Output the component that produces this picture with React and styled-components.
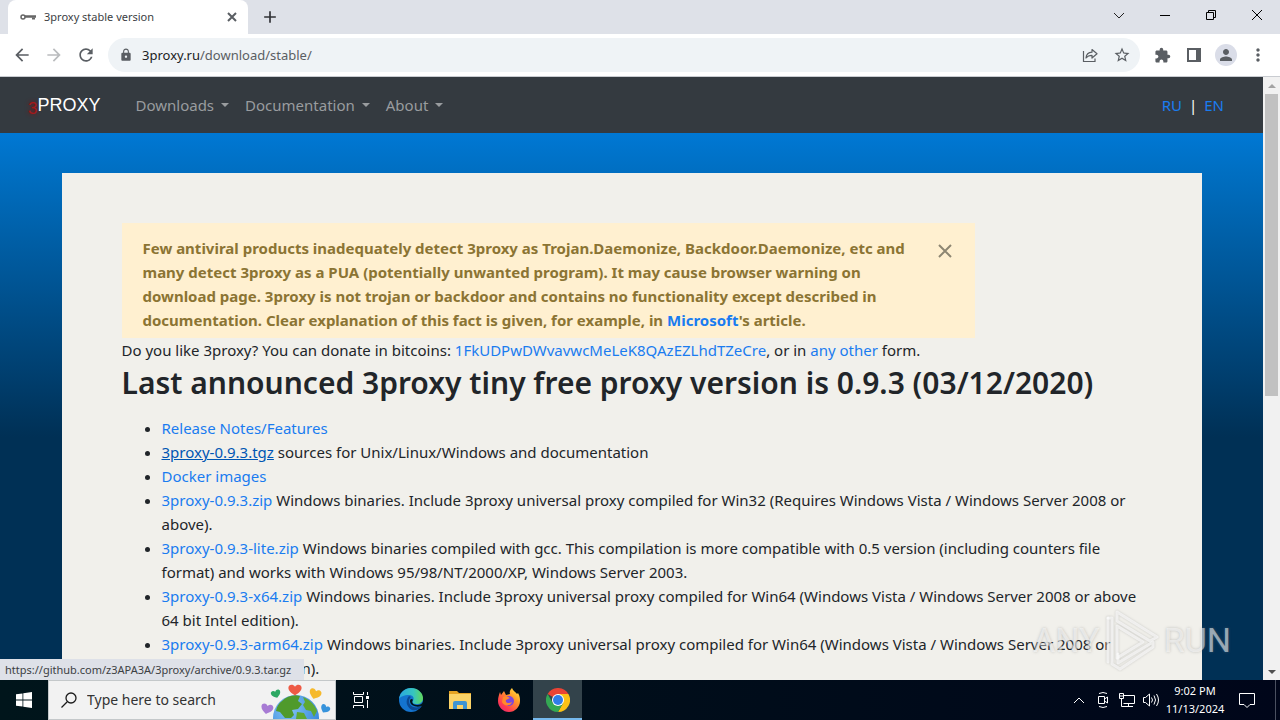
import React, { useState } from 'react';
import styled, { createGlobalStyle } from 'styled-components';
import {
  MdArrowBack, MdArrowForward, MdRefresh, MdLock, MdStarBorder,
  MdExtension, MdPerson, MdMoreVert, MdAdd
} from 'react-icons/md';

const GlobalStyle = createGlobalStyle`
  * {
    box-sizing: border-box;
  }

  body {
    margin: 0;
    font-family: 'Noto Sans', 'Open Sans', sans-serif;
    font-size: 15px;
    line-height: 24px;
    color: #212529;
  }

  button, input {
    font: inherit;
    color: inherit;
  }
`

const StyledScreen = styled.div`
  display: flex;
  flex-direction: column;
  height: 100vh;
  overflow: hidden;
`

/* browser chrome */

const StyledTabStrip = styled.div`
  display: flex;
  align-items: stretch;
  flex-shrink: 0;
  height: 34px;
  padding-left: 8px;
  background: #dee1e8;
`

const StyledTab = styled.div`
  display: flex;
  align-items: center;
  width: 240px;
  padding: 0 8px 0 12px;
  background: #fff;
  border-radius: 8px 8px 0 0;
  color: #3c4043;
  font-size: 11px;

  span {
    flex: 1;
    margin-left: 8px;
  }
`

const StyledIconButton = styled.button`
  display: flex;
  align-items: center;
  justify-content: center;
  flex-shrink: 0;
  width: ${props => props.$width || 32}px;
  padding: 0;
  background: none;
  border: none;
  color: ${props => props.$color || '#5a5e63'};
  cursor: pointer;
`

const StyledWindowControls = styled.div`
  display: flex;
  margin-left: auto;
  padding-bottom: 5px;
`

const StyledToolbar = styled.div`
  display: flex;
  align-items: center;
  flex-shrink: 0;
  height: 43px;
  padding: 0 6px;
  background: #fff;
  border-bottom: 1px solid #c9ccd1;
`

const StyledAddressBar = styled.div`
  display: flex;
  align-items: center;
  flex: 1;
  height: 34px;
  margin: 0 6px;
  padding: 0 2px 0 11px;
  border-radius: 17px;
  background: #eff3f6;
  color: #5a5e63;
  font-size: 13px;

  div {
    flex: 1;
    margin-left: 9px;
  }

  strong {
    color: #202124;
    font-weight: 400;
  }
`

const StyledAvatar = styled.span`
  display: flex;
  align-items: center;
  justify-content: center;
  width: 22px;
  height: 22px;
  border-radius: 50%;
  background: #dadde8;
`

/* page */

const StyledViewport = styled.div`
  display: flex;
  flex: 1;
  min-height: 0;
  position: relative;
`

const StyledPage = styled.div`
  flex: 1;
  min-width: 0;
  overflow: hidden;
  background: #003055 linear-gradient(#0078d4 56px, #0070c4 90px, #003055 360px);
`

const StyledNavbar = styled.nav`
  display: flex;
  align-items: center;
  height: 56px;
  padding: 0 39px 0 28px;
  background: #343a40;
`

const StyledBrand = styled.a`
  display: flex;
  align-items: flex-end;
  margin-right: 27px;
  color: #fff;
  font-family: 'Liberation Sans', Arial, sans-serif;
  font-size: 18px;
  text-decoration: none;

  span {
    color: #a3191c;
    font-size: 17px;
    line-height: 16px;
    text-shadow: 0 0 4px #801010;
  }
`

const StyledNavLink = styled.button`
  display: flex;
  align-items: center;
  padding: 8px;
  background: none;
  border: none;
  color: #999c9f;
  cursor: pointer;

  &:after {
    content: '';
    margin-left: 7px;
    border-top: 4px solid #999c9f;
    border-left: 4px solid transparent;
    border-right: 4px solid transparent;
  }
`

const StyledLanguages = styled.div`
  display: flex;
  gap: 7px;
  margin-left: auto;
  color: #fff;
`

const StyledLink = styled.a`
  color: ${props => props.$hovered ? '#0056b3' : '#1a7cf0'};
  text-decoration: ${props => props.$hovered ? 'underline' : 'none'};
`

const StyledContainer = styled.main`
  max-width: 1140px;
  min-height: 100%;
  margin: 40px auto 0;
  padding: 50px 60px;
  background: #f1f0eb;
`

const StyledAlert = styled.div`
  display: flex;
  align-items: flex-start;
  max-width: 853px;
  height: 115px;
  padding: 13px 20px 0 21px;
  background: #fff0d0;
  color: #8b7433;
  font-weight: 700;

  p {
    flex: 1;
    margin: 0;
  }
`

const StyledDismiss = styled(StyledIconButton)`
  width: 20px;
  height: 30px;
`

const StyledHeading = styled.h2`
  margin: 0 0 12px;
  font-size: 30px;
  font-weight: 600;
  line-height: 42px;
`

const StyledText = styled.p`
  margin: 0;
`

const StyledList = styled.ul`
  margin: 0;
  padding-left: 40px;
`

const StyledScrollbar = styled.div`
  display: flex;
  flex-direction: column;
  width: 17px;
  background: #f1f1f1;
`

const StyledScrollButton = styled(StyledIconButton)`
  width: 17px;
  height: 17px;
`

const StyledTrack = styled.div`
  flex: 1;
  padding: 0 2px;

  &:before {
    content: '';
    display: block;
    height: 53%;
    background: #c1c1c1;
  }
`

const StyledStatus = styled.div`
  position: absolute;
  left: 0;
  bottom: 0;
  width: 304px;
  height: 21px;
  padding-left: 5px;
  background: #dee1e8;
  color: #3c4043;
  font-size: 11px;
  line-height: 21px;
  white-space: nowrap;
`

const StyledWatermark = styled.div`
  position: absolute;
  right: 49px;
  bottom: 8px;
  display: flex;
  align-items: center;
  gap: 4px;
  color: rgba(255, 255, 255, 0.55);
  font-family: Roboto, sans-serif;
  font-size: 34px;
  line-height: 60px;
  text-shadow: 0 0 3px rgba(120, 120, 120, 0.4);
  pointer-events: none;
`

/* taskbar */

const StyledTaskbar = styled.footer`
  display: flex;
  flex-shrink: 0;
  height: 40px;
  background: linear-gradient(90deg, #00151b, #000c1a 60%, #00061a);
  color: #fff;
`

const StyledSearch = styled.label`
  display: flex;
  align-items: center;
  width: 288px;
  padding-left: 12px;
  background: #f2f2f2;
  border: 1px solid #c4c8ca;
  color: #1b1b1b;

  input {
    flex: 1;
    min-width: 0;
    margin-left: 10px;
    padding: 0;
    background: none;
    border: none;
    outline: none;
    font-size: 14px;
  }

  input::placeholder {
    color: #333;
    opacity: 1;
  }

  > svg:last-child {
    align-self: stretch;
    margin-right: 2px;
  }
`

const StyledApp = styled(StyledIconButton)`
  width: ${props => props.$width || 49}px;
  border-bottom: 2px solid ${props => props.$active ? '#76b9ed' : 'transparent'};
  border-top: 2px solid transparent;
  background: ${props => props.$active ? '#33434b' : 'none'};
`

const StyledTray = styled.div`
  display: flex;
  margin-left: auto;
  padding-right: 4px;
`

const StyledClock = styled.button`
  width: 64px;
  padding: 2px 0;
  background: none;
  border: none;
  color: #fff;
  font-size: 11px;
  line-height: 18px;
  text-align: center;
`

const StyledNotifications = styled(StyledIconButton)`
  width: 49px;
  padding-right: 9px;
  border-right: 1px solid #4a5060;
`

const KeyIcon = () => (
  <svg width="16" height="16" viewBox="0 0 16 16" fill="none" stroke="#666">
    <circle cx="3" cy="8" r="2" strokeWidth="1.5" />
    <path d="M5 7.5h11" strokeWidth="2.5" />
    <path d="M12 9.5h3" strokeWidth="2" />
  </svg>
)

const ShareIcon = () => (
  <svg width="16" height="16" viewBox="0 0 16 16" fill="none" stroke="#5a5e63" strokeWidth="1.2">
    <path d="M1.500 4v10.500h11.500v-3" />
    <path d="M4 11c.3-4 2.500-5.700 6-5.800V2.500l5 4.300-5 4.200V8.300c-2.700 0-4.500.7-6 2.700z" strokeLinejoin="round" />
  </svg>
)

const PanelIcon = () => (
  <svg width="14" height="14" viewBox="0 0 14 14">
    <path d="M0 0h14v14H0zM2 2v10h7V2z" fill="#5a5e63" fillRule="evenodd" />
  </svg>
)

const Glyph = ({ d, size = 12, width = 1, color = 'currentColor' }) => (
  <svg width={size} height={size} viewBox={`0 0 ${size} ${size}`} fill="none" stroke={color} strokeWidth={width}>
    <path d={d} />
  </svg>
)

const Arrow = ({ down, color }) => (
  <svg width="8" height="4" viewBox="0 0 8 4">
    <path d={down ? 'M0 0h8L4 4z' : 'M0 4h8L4 0z'} fill={color} />
  </svg>
)

const PlayLogo = () => (
  <svg width="56" height="64" viewBox="0 0 56 64" fill="none" stroke="#fff" strokeOpacity="0.65" strokeWidth="3" strokeLinejoin="round" strokeLinecap="round">
    <g filter="drop-shadow(0 0 1px rgba(120,120,120,.5))">
      <path d="M13 4L53 29 46 33 13 13z" />
      <path d="M13 18v32l26-16z" />
      <path d="M4 10h4v46l8 5 33-22v-5L14 55V46" />
      <path d="M4 10v44" />
    </g>
  </svg>
)

const WindowsLogo = () => (
  <svg width="16" height="16" viewBox="0 0 16 16" fill="#fff">
    <path d="M0 2.300l6.500-.9v6.200H0zM7.300 1.300L16 0v7.600H7.300zM0 8.400h6.500v6.200L0 13.700zM7.300 8.400H16V16l-8.700-1.300z" />
  </svg>
)

const Heart = ({ x, y, r = 0, s = 1, fill }) => (
  <path
    transform={`translate(${x} ${y}) rotate(${r}) scale(${s})`}
    d="M0 5C-3 3-6 1-6-2c0-3 4-4 6-1 2-3 6-2 6 1 0 3-3 5-6 7z"
    fill={fill}
  />
)

const Globe = () => (
  <svg width="72" height="38" viewBox="0 0 72 38">
    <defs>
      <radialGradient id="sea" cx="0.35" cy="0.3" r="0.8">
        <stop offset="0" stopColor="#83c3f5" />
        <stop offset="1" stopColor="#2d7fd8" />
      </radialGradient>
    </defs>
    <circle cx="35" cy="37" r="23" fill="url(#sea)" />
    <path d="M21 20c5-5 12-7 18-5l-2 5 4 3-4 5-6 1 2 5-3 3h-6l-5-6-4-1c1-5 3-8 6-10z" fill="#4f9a2c" />
    <path d="M42 16c6 2 12 8 14 14l-3 6-3-6-5-1-3-5 2-3zM36 31l7 1 3 6H35z" fill="#5fa832" />
    <Heart x={6} y={28} r={12} fill="#a77bd4" />
    <Heart x={15} y={13} r={-18} s={0.8} fill="#2da863" />
    <Heart x={34} y={9} s={1.1} fill="#ee5a45" />
    <Heart x={54} y={13} r={20} fill="#f6b92c" />
    <Heart x={64} y={28} r={30} s={0.8} fill="#3793dc" />
  </svg>
)

const TaskViewIcon = () => (
  <svg width="18" height="18" viewBox="0 0 18 18" fill="none" stroke="#fff">
    <path d="M1.500 1v2.500h10V1M1.500 17v-2.500h10V17M2.500 5.500h8v6h-8zM15.500 1v3M15.500 9v8" />
    <path d="M14 5h3v3h-3z" fill="#fff" stroke="none" />
  </svg>
)

const EdgeIcon = () => (
  <svg width="24" height="24" viewBox="0 0 24 24">
    <defs>
      <linearGradient id="edgeTop" x1="0" x2="1">
        <stop offset="0" stopColor="#2aa7e0" />
        <stop offset="0.6" stopColor="#36c5c0" />
        <stop offset="1" stopColor="#62d95a" />
      </linearGradient>
    </defs>
    <circle cx="12" cy="12" r="12" fill="#1474cf" />
    <path d="M0 11C1 4 6 0 12 0c7 0 12 5 12 10 0 4-3 6-6 6-4 0-5-1-4-3 2-4-1-6-4-6C5 7 1 9 0 11z" fill="url(#edgeTop)" />
    <path d="M10 8c-4 4-3 11 3 14 4 1 8-1 10-4-6 3-13 1-13-5 0-2 1-3 2-4z" fill="#0b4a94" />
    <path d="M14 12c-2 2 0 5 4 5 3 0 5-1 6-3v3c-3 3-13 2-13-4 0-2 2-3 3-1z" fill="#00151b" />
  </svg>
)

const FolderIcon = () => (
  <svg width="22" height="18" viewBox="0 0 22 18">
    <path d="M0 0h8l2 2h12v4H0z" fill="#e5a322" />
    <path d="M0 3h22v15H0z" fill="#fbd367" />
    <path d="M4 18v-6q0-2 2-2h10q2 0 2 2v6h-4v-4H8v4z" fill="#3e95d3" />
  </svg>
)

const FirefoxIcon = () => (
  <svg width="24" height="24" viewBox="0 0 24 24">
    <defs>
      <linearGradient id="fox" x1="1" y1="0" x2="0.2" y2="1">
        <stop offset="0" stopColor="#fff24a" />
        <stop offset="0.4" stopColor="#ff9a28" />
        <stop offset="0.8" stopColor="#ff3b50" />
        <stop offset="1" stopColor="#e62a6c" />
      </linearGradient>
    </defs>
    <path d="M3 4l1 3 3-4 2 4 4-1c-1-3 1-5 2-6 1 3 4 4 5 6l1-1c2 3 2 6 2 8 0 6-5 11-11 11S1 19 1 13c0-4 1-6 2-9z" fill="url(#fox)" />
    <circle cx="12" cy="13" r="5" fill="#7b46dd" />
    <path d="M6 9c2-1 4-1 7 1l-4 2c-1 3 3 4 6 2-1 4-8 5-10 0z" fill="#ff8a2a" />
  </svg>
)

const ChromeIcon = () => (
  <svg width="24" height="24" viewBox="0 0 24 24">
    <path d="M12 12L1.600 6A12 12 0 0 1 22.400 6z" fill="#ea4335" />
    <path d="M12 12V6h10.400A12 12 0 0 1 12 24l5-9z" fill="#fbc116" />
    <path d="M1.600 6A12 12 0 0 0 12 24l5.200-9H6.800z" fill="#34a853" />
    <circle cx="12" cy="12" r="6" fill="#fff" />
    <circle cx="12" cy="12" r="5" fill="#2f7de9" />
  </svg>
)

const CameraIcon = () => (
  <svg width="14" height="18" viewBox="0 0 14 18" fill="none" stroke="#fff">
    <path d="M2.500 5.500h6v7h-6zM8.500 8l3-2v6l-3-2M3 2.500q4-2 8 0M3 15.500q4 2 8 0" />
  </svg>
)

const NetworkIcon = () => (
  <svg width="18" height="16" viewBox="0 0 18 16" fill="none" stroke="#fff">
    <path d="M5.500 3.500h11v8h-11M10.500 12v2.500M6 14.500h9M3.500 7v7.500h3M1.500 1.500h4v5h-4zM1.500 4h4" />
  </svg>
)

const VolumeIcon = () => (
  <svg width="18" height="16" viewBox="0 0 18 16" fill="none" stroke="#fff">
    <path d="M1.500 5.500h2l4-3.500v12l-4-3.500h-2zM9.500 5.500q2 2.500 0 5M12 3.500q3 4.500 0 9M14.500 2q4 6 0 12" />
  </svg>
)

const downloads = [
  { link: 'Release Notes/Features' },
  { link: '3proxy-0.9.3.tgz', text: 'sources for Unix/Linux/Windows and documentation', hovered: true },
  { link: 'Docker images' },
  { link: '3proxy-0.9.3.zip', text: 'Windows binaries. Include 3proxy universal proxy compiled for Win32 (Requires Windows Vista / Windows Server 2008 or above).' },
  { link: '3proxy-0.9.3-lite.zip', text: 'Windows binaries compiled with gcc. This compilation is more compatible with 0.5 version (including counters file format) and works with Windows 95/98/NT/2000/XP, Windows Server 2003.' },
  { link: '3proxy-0.9.3-x64.zip', text: 'Windows binaries. Include 3proxy universal proxy compiled for Win64 (Windows Vista / Windows Server 2008 or above 64 bit Intel edition).' },
  { link: '3proxy-0.9.3-arm64.zip', text: 'Windows binaries. Include 3proxy universal proxy compiled for Win64 (Windows Vista / Windows Server 2008 or above ARM64 edition).' }
]

const BrowserChrome = () => (
  <>
    <StyledTabStrip>
      <StyledTab>
        <KeyIcon />
        <span>3proxy stable version</span>
        <StyledIconButton $width={16} aria-label="Close tab"><Glyph size={10} width={2} d="M1 1l8 8M9 1L1 9" /></StyledIconButton>
      </StyledTab>
      <StyledIconButton $width={44} $color="#303236" aria-label="New tab"><MdAdd size={20} /></StyledIconButton>
      <StyledWindowControls>
        <StyledIconButton $width={46} $color="#222" aria-label="Search tabs"><Glyph d="M1 4l5 5 5-5" /></StyledIconButton>
        <StyledIconButton $width={46} $color="#000" aria-label="Minimize"><Glyph d="M1 6.500h10" /></StyledIconButton>
        <StyledIconButton $width={46} $color="#000" aria-label="Restore"><Glyph d="M1.500 3.500h7v7h-7zM3.500 3.500v-2h7v7h-2" /></StyledIconButton>
        <StyledIconButton $width={46} $color="#000" aria-label="Close"><Glyph d="M1 1l10 10M11 1L1 11" /></StyledIconButton>
      </StyledWindowControls>
    </StyledTabStrip>
    <StyledToolbar>
      <StyledIconButton aria-label="Back"><MdArrowBack size={20} /></StyledIconButton>
      <StyledIconButton $color="#babcbe" aria-label="Forward"><MdArrowForward size={20} /></StyledIconButton>
      <StyledIconButton aria-label="Reload"><MdRefresh size={20} /></StyledIconButton>
      <StyledAddressBar>
        <MdLock size={14} />
        <div role="textbox" aria-label="Address"><strong>3proxy.ru</strong>/download/stable/</div>
        <StyledIconButton aria-label="Share"><ShareIcon /></StyledIconButton>
        <StyledIconButton aria-label="Bookmark"><MdStarBorder size={18} /></StyledIconButton>
      </StyledAddressBar>
      <StyledIconButton aria-label="Extensions"><MdExtension size={17} /></StyledIconButton>
      <StyledIconButton aria-label="Side panel"><PanelIcon /></StyledIconButton>
      <StyledIconButton aria-label="Profile"><StyledAvatar><MdPerson size={18} /></StyledAvatar></StyledIconButton>
      <StyledIconButton aria-label="Menu"><MdMoreVert size={20} /></StyledIconButton>
    </StyledToolbar>
  </>
)

const Navbar = () => (
  <StyledNavbar>
    <StyledBrand href="#"><span>3</span>PROXY</StyledBrand>
    <StyledNavLink>Downloads</StyledNavLink>
    <StyledNavLink>Documentation</StyledNavLink>
    <StyledNavLink>About</StyledNavLink>
    <StyledLanguages>
      <StyledLink href="#">RU</StyledLink>
      <span>|</span>
      <StyledLink href="#">EN</StyledLink>
    </StyledLanguages>
  </StyledNavbar>
)

const Taskbar = () => {
  const [query, setQuery] = useState('');

  return (
    <StyledTaskbar>
      <StyledIconButton $width={48} aria-label="Start"><WindowsLogo /></StyledIconButton>
      <StyledSearch>
        <Glyph size={16} width={1.3} d="M6 10L.5 15.500M15 6A5 5 0 1 1 5 6a5 5 0 1 1 10 0" />
        <input
          type="text"
          aria-label="Search"
          placeholder="Type here to search"
          value={query}
          onChange={event => setQuery(event.target.value)}/>
        <Globe />
      </StyledSearch>
      <StyledApp $width={50} aria-label="Task view"><TaskViewIcon /></StyledApp>
      <StyledApp aria-label="Edge"><EdgeIcon /></StyledApp>
      <StyledApp aria-label="File Explorer"><FolderIcon /></StyledApp>
      <StyledApp aria-label="Firefox"><FirefoxIcon /></StyledApp>
      <StyledApp $active aria-label="Chrome"><ChromeIcon /></StyledApp>
      <StyledTray>
        <StyledIconButton $width={24} $color="#fff" aria-label="Hidden icons"><Glyph d="M1 9l5-5 5 5" /></StyledIconButton>
        <StyledIconButton $width={24} aria-label="Camera"><CameraIcon /></StyledIconButton>
        <StyledIconButton $width={24} aria-label="Network"><NetworkIcon /></StyledIconButton>
        <StyledIconButton $width={24} aria-label="Volume"><VolumeIcon /></StyledIconButton>
        <StyledClock>9:02 PM<br />11/13/2024</StyledClock>
        <StyledNotifications $color="#fff" aria-label="Notifications">
          <Glyph size={18} d="M1.500 2.500h15v11H12l-3 3-3-3H1.500z" />
        </StyledNotifications>
      </StyledTray>
    </StyledTaskbar>
  )
}

const App = () => (
  <StyledScreen>
    <GlobalStyle />
    <BrowserChrome />
    <StyledViewport>
      <StyledPage>
        <Navbar />
        <StyledContainer>
          <StyledAlert role="alert">
            <p>
              Few antiviral products inadequately detect 3proxy as Trojan.Daemonize, Backdoor.Daemonize, etc and
              many detect 3proxy as a PUA (potentially unwanted program). It may cause browser warning on
              download page. 3proxy is not trojan or backdoor and contains no functionality except described in
              documentation. Clear explanation of this fact is given, for example,
              in <StyledLink href="#">Microsoft</StyledLink>'s article.
            </p>
            <StyledDismiss $color="#8d8672" aria-label="Close">
              <Glyph size={14} width={2} d="M1 1l12 12M13 1L1 13" />
            </StyledDismiss>
          </StyledAlert>
          <StyledText>
            Do you like 3proxy? You can donate in
            bitcoins: <StyledLink href="#">1FkUDPwDWvavwcMeLeK8QAzEZLhdTZeCre</StyledLink>, or
            in <StyledLink href="#">any other</StyledLink> form.
          </StyledText>
          <StyledHeading>Last announced 3proxy tiny free proxy version is 0.9.3 (03/12/2020)</StyledHeading>
          <StyledList>
            {downloads.map(item => (
              <li key={item.link}>
                <StyledLink href="#" $hovered={item.hovered}>{item.link}</StyledLink> {item.text}
              </li>
            ))}
          </StyledList>
        </StyledContainer>
      </StyledPage>
      <StyledScrollbar>
        <StyledScrollButton aria-label="Scroll up"><Arrow color="#a3a3a3" /></StyledScrollButton>
        <StyledTrack />
        <StyledScrollButton aria-label="Scroll down"><Arrow down color="#505050" /></StyledScrollButton>
      </StyledScrollbar>
      <StyledStatus>https://github.com/z3APA3A/3proxy/archive/0.9.3.tar.gz</StyledStatus>
      <StyledWatermark>
        <span>ANY</span>
        <PlayLogo />
        <span>RUN</span>
      </StyledWatermark>
    </StyledViewport>
    <Taskbar />
  </StyledScreen>
)

export default App;
